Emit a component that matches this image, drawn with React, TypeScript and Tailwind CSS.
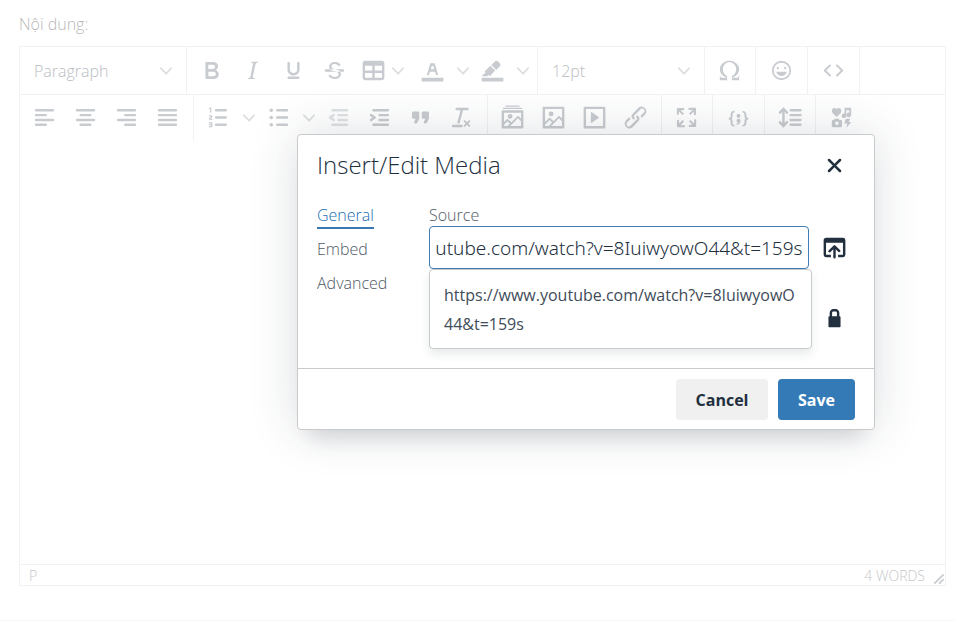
import { useLayoutEffect, useRef, useState } from "react";
import type { ReactNode } from "react";

const ICONS: Record<string, string> = {
  bold: "M7.8 19c-.3 0-.5 0-.6-.2l-.2-.5V5.7c0-.2 0-.4.2-.5l.6-.2h5c1.5 0 2.7.3 3.5 1 .7.6 1.1 1.4 1.1 2.5a3 3 0 01-.6 1.9c-.4.6-1 1-1.6 1.2.4.1.9.3 1.3.6s.8.7 1 1.2c.4.4.5 1 .5 1.6 0 1.3-.4 2.3-1.3 3-.8.7-2.1 1-3.8 1H7.8zm5-8.3c.6 0 1.2-.1 1.6-.5.4-.3.6-.7.6-1.3 0-1.1-.8-1.7-2.3-1.7H9.3v3.5h3.4zm.5 6c.7 0 1.3-.1 1.7-.4.4-.4.6-.9.6-1.5s-.2-1-.7-1.4c-.4-.3-1-.4-2-.4H9.4v3.8h4z",
  italic: "M16.7 4.7l-.1.9h-.3c-.6 0-1 0-1.4.3-.3.3-.4.6-.5 1.1l-2.1 9.8v.6c0 .5.4.8 1.4.8h.2l-.2.8H8l.2-.8h.2c1.1 0 1.8-.5 2-1.5l2-9.8.1-.5c0-.6-.4-.8-1.4-.8h-.3l.2-.9h5.8z",
  underline: "M16 5c.6 0 1 .4 1 1v5.5a4 4 0 01-.4 1.8l-1 1.4a5.3 5.3 0 01-5.5 1 5 5 0 01-1.6-1c-.5-.4-.8-.9-1.1-1.4a4 4 0 01-.4-1.8V6c0-.6.4-1 1-1s1 .4 1 1v5.5c0 .3 0 .6.2 1l.6.7a3.3 3.3 0 002.2.8 3.4 3.4 0 002.2-.8c.3-.2.4-.5.6-.8l.2-.9V6c0-.6.4-1 1-1zM8 17h8c.6 0 1 .4 1 1s-.4 1-1 1H8a1 1 0 010-2z",
  strike: "M15.6 8.5c-.5-.7-1-1.1-1.3-1.3-.6-.4-1.3-.6-2-.6-2.7 0-2.8 1.7-2.8 2.1 0 1.6 1.8 2 3.2 2.3 4.4.9 4.6 2.8 4.6 3.9 0 1.4-.7 4.1-5 4.1A6.2 6.2 0 017 16.4l1.5-1.1c.4.6 1.6 2 3.7 2 1.6 0 2.5-.4 3-1.2.4-.8.3-2-.8-2.6-.7-.4-1.6-.7-2.9-1-1-.2-3.9-.8-3.9-3.6C7.6 6 10.3 5 12.4 5c2.9 0 4.2 1.6 4.7 2.4l-1.5 1.1zM5 11h14a1 1 0 010 2H5a1 1 0 010-2z",
  table: "M19 4a2 2 0 012 2v12a2 2 0 01-2 2H5a2 2 0 01-2-2V6c0-1.1.9-2 2-2h14zM5 14v4h6v-4H5zm14 0h-6v4h6v-4zm0-6h-6v4h6V8zM5 12h6V8H5v4z",
  textColor: "M3 18h18v3H3zM8.7 16h-.8a.5.5 0 01-.5-.6l2.7-9c.1-.3.3-.4.5-.4h2.8c.2 0 .4.1.5.4l2.7 9a.5.5 0 01-.5.6h-.8a.5.5 0 01-.4-.4l-.7-2.2c0-.3-.3-.4-.5-.4h-3.4c-.2 0-.4.1-.5.4l-.7 2.2c0 .3-.2.4-.4.4zm2.6-7.6l-.6 2a.5.5 0 00.5.6h1.6a.5.5 0 00.5-.6l-.6-2c0-.3-.3-.4-.5-.4h-.4c-.2 0-.4.1-.5.4z",
  highlight: "M3 18h18v3H3zM7.7 16.7H3l3.3-3.3-.7-.8L10.2 8l4 4.1-4 4.2c-.2.2-.6.2-.8 0l-.6-.7-1.1 1.1zM11 7.4l3-2.9a2 2 0 012.6 0L18 6c.7.7.7 2 0 2.7l-2.9 2.9-1.8-1.8-.5-.6z",
  omega: "M15 18h4l1-2v4h-6v-3.3l1.4-1a6 6 0 001.8-2.9 6.3 6.3 0 00-.1-4.1 5.8 5.8 0 00-3-3.2c-.6-.3-1.3-.5-2.1-.5a5.1 5.1 0 00-3.9 1.8 6.3 6.3 0 00-1.3 6 6.2 6.2 0 001.8 3l1.4.9V20H4v-4l1 2h4v-.5l-2-1L5.4 15A6.5 6.5 0 014 11c0-1 .2-1.9.6-2.7A7 7 0 017.8 5C9.1 4.3 10.5 4 12 4c1.4 0 2.8.3 4 1a7.5 7.5 0 013.4 3.3c.4.8.6 1.7.6 2.7a6.5 6.5 0 01-1.5 4L17 16.5l-2 1v.5z",
  emoji: "M9 11c.6 0 1-.4 1-1s-.4-1-1-1a1 1 0 00-1 1c0 .6.4 1 1 1zm6 0c.6 0 1-.4 1-1s-.4-1-1-1a1 1 0 00-1 1c0 .6.4 1 1 1zm-3 5.5c2.1 0 4-1.5 4.4-3.5H7.6c.5 2 2.3 3.5 4.4 3.5zM12 4a8 8 0 100 16 8 8 0 000-16zm0 14.5a6.5 6.5 0 110-13 6.5 6.5 0 010 13z",
  source: "M9.8 15.7c.3.3.3.8 0 1-.3.4-.9.4-1.2 0l-4.4-4.1a.8.8 0 010-1.2l4.4-4.2c.3-.3.9-.3 1.2 0 .3.3.3.8 0 1.1L6 12l3.8 3.7zM14.2 15.7c-.3.3-.3.8 0 1 .4.4.9.4 1.2 0l4.4-4.1c.3-.3.3-.9 0-1.2l-4.4-4.2a.8.8 0 00-1.2 0c-.3.3-.3.8 0 1.1L18 12l-3.8 3.7z",
  alignLeft: "M5 5h14a1 1 0 010 2H5a1 1 0 010-2zm0 4h8a1 1 0 010 2H5a1 1 0 010-2zm0 8h8a1 1 0 010 2H5a1 1 0 010-2zm0-4h14a1 1 0 010 2H5a1 1 0 010-2z",
  alignCenter: "M5 5h14a1 1 0 010 2H5a1 1 0 010-2zm3 4h8a1 1 0 010 2H8a1 1 0 010-2zm0 8h8a1 1 0 010 2H8a1 1 0 010-2zm-3-4h14a1 1 0 010 2H5a1 1 0 010-2z",
  alignRight: "M5 5h14a1 1 0 010 2H5a1 1 0 010-2zm6 4h8a1 1 0 010 2h-8a1 1 0 010-2zm0 8h8a1 1 0 010 2h-8a1 1 0 010-2zm-6-4h14a1 1 0 010 2H5a1 1 0 010-2z",
  alignJustify: "M5 5h14a1 1 0 010 2H5a1 1 0 010-2zm0 4h14a1 1 0 010 2H5a1 1 0 010-2zm0 4h14a1 1 0 010 2H5a1 1 0 010-2zm0 4h14a1 1 0 010 2H5a1 1 0 010-2z",
  ordered: "M10 17h8c.6 0 1 .4 1 1s-.4 1-1 1h-8a1 1 0 010-2zm0-6h8c.6 0 1 .4 1 1s-.4 1-1 1h-8a1 1 0 010-2zm0-6h8c.6 0 1 .4 1 1s-.4 1-1 1h-8a1 1 0 110-2zM6 4v3.5c0 .3-.2.5-.5.5a.5.5 0 01-.5-.5V5h-.5a.5.5 0 010-1H6zm-1 8.8l.2.2h1.3c.3 0 .5.2.5.5s-.2.5-.5.5H4.9a1 1 0 01-.9-1V13c0-.4.3-.8.6-1l1.2-.4.2-.3a.2.2 0 00-.2-.2H4.5a.5.5 0 01-.5-.5c0-.3.2-.5.5-.5h1.6c.5 0 .9.4.9 1v.1c0 .4-.3.8-.6 1l-1.2.4-.2.3zM7 17v2c0 .6-.4 1-1 1H4.5a.5.5 0 010-1h1.2c.2 0 .3-.1.3-.3 0-.2-.1-.3-.3-.3H4.4a.4.4 0 110-.8h1.3c.2 0 .3-.1.3-.3 0-.2-.1-.3-.3-.3H4.5a.5.5 0 110-1H6c.6 0 1 .4 1 1z",
  unordered: "M11 5h8a1 1 0 010 2h-8a1 1 0 010-2zm0 6h8a1 1 0 010 2h-8a1 1 0 010-2zm0 6h8a1 1 0 010 2h-8a1 1 0 010-2zM4.500 6a1.500 1.500 0 103 0 1.500 1.500 0 10-3 0zm0 6a1.500 1.500 0 103 0 1.500 1.500 0 10-3 0zm0 6a1.500 1.500 0 103 0 1.500 1.500 0 10-3 0z",
  outdent: "M7 5h12c.6 0 1 .4 1 1s-.4 1-1 1H7a1 1 0 110-2zm5 4h7c.6 0 1 .4 1 1s-.4 1-1 1h-7a1 1 0 010-2zm0 4h7c.6 0 1 .4 1 1s-.4 1-1 1h-7a1 1 0 010-2zm-5 4h12a1 1 0 010 2H7a1 1 0 010-2zm1.600-3.800a1 1 0 01-1.200 1.600l-3-2a1 1 0 010-1.600l3-2a1 1 0 011.200 1.600L6.800 12l1.800 1.200z",
  indent: "M7 5h12c.6 0 1 .4 1 1s-.4 1-1 1H7a1 1 0 110-2zm5 4h7c.6 0 1 .4 1 1s-.4 1-1 1h-7a1 1 0 010-2zm0 4h7c.6 0 1 .4 1 1s-.4 1-1 1h-7a1 1 0 010-2zm-5 4h12a1 1 0 010 2H7a1 1 0 010-2zm-2.600-3.800L6.200 12l-1.800-1.200a1 1 0 011.200-1.600l3 2a1 1 0 010 1.600l-3 2a1 1 0 11-1.200-1.600z",
  quote: "M7.5 17h.9c.4 0 .7-.2.9-.6L11 13V8c0-.6-.4-1-1-1H6a1 1 0 00-1 1v4c0 .6.4 1 1 1h2l-1.300 2.700a1 1 0 00.8 1.300zm8 0h.9c.4 0 .7-.2.9-.6L19 13V8c0-.6-.4-1-1-1h-4a1 1 0 00-1 1v4c0 .6.4 1 1 1h2l-1.300 2.700a1 1 0 00.8 1.300z",
  clear: "M13.2 6a1 1 0 010 .2l-2.6 10a1 1 0 01-1 .8h-.2a.8.8 0 01-.8-1l2.6-10H8a1 1 0 110-2h9a1 1 0 010 2h-3.8zM5 18h7a1 1 0 010 2H5a1 1 0 010-2zm13 1.5L16.5 18 15 19.5a.7.7 0 01-1-1l1.500-1.500-1.500-1.500a.7.7 0 011-1l1.500 1.500 1.500-1.500a.7.7 0 011 1L17.500 17l1.500 1.500a.7.7 0 01-1 1z",
  gallery: "M5 15.7l2.300-2.200c.3-.3.7-.3 1 0L11 16l5.100-5c.3-.4.8-.4 1 0l2 1.900V8H5v7.700zM5 18V19h3l1.800-1.900-2-2L5 17.900zm14-3l-2.500-2.400-6.400 6.500H19v-4zM4 6h16c.6 0 1 .4 1 1v13c0 .6-.4 1-1 1H4a1 1 0 01-1-1V7c0-.6.4-1 1-1zm6 7a2 2 0 110-4 2 2 0 010 4zM4.500 4h15a.5.5 0 110 1h-15a.5.5 0 010-1zm2-2h11a.5.5 0 110 1h-11a.5.5 0 010-1z",
  image: "M5 15.7l3.300-3.200c.3-.3.7-.3 1 0L12 15l4.100-4c.3-.4.8-.4 1 0l2 1.900V5H5v10.700zM5 18V19h3l2.800-2.900-2-2L5 17.900zm14-3l-2.500-2.400-6.400 6.500H19v-4zM4 3h16c.6 0 1 .4 1 1v16c0 .6-.4 1-1 1H4a1 1 0 01-1-1V4c0-.6.4-1 1-1zm6 8a2 2 0 110-4 2 2 0 010 4z",
  media: "M4 3h16c.6 0 1 .4 1 1v16c0 .6-.4 1-1 1H4a1 1 0 01-1-1V4c0-.6.4-1 1-1zm1 2v14h14V5H5zm4.800 2.600l5.600 4a.5.5 0 010 .8l-5.600 4A.5.5 0 019 16V8a.5.5 0 01.8-.4z",
  link: "M6.200 12.300a1 1 0 011.400 1.400l-2.100 2a2 2 0 102.700 2.800l4.800-4.800a1 1 0 000-1.400 1 1 0 111.400-1.300 2.900 2.900 0 010 4L9.600 20a3.900 3.900 0 01-5.500-5.500l2-2zm11.600-.6a1 1 0 01-1.400-1.400l2-2a2 2 0 10-2.600-2.800L11 10.300a1 1 0 000 1.400A1 1 0 119.600 13a2.900 2.900 0 010-4L14.400 4a3.900 3.900 0 015.500 5.500l-2 2z",
  fullscreen: "M15.300 10l-1.200-1.300 2.900-3h-2.300a.9.9 0 110-1.700H19c.5 0 .9.4.9.9v4.400a.9.9 0 11-1.800 0V7l-2.900 3zm0 4l3 3v-2.300a.9.9 0 111.700 0V19c0 .5-.4.9-.9.9h-4.400a.9.9 0 110-1.800H17l-3-2.900 1.300-1.200zM10 15.400l-2.900 3h2.300a.9.9 0 110 1.700H5a.9.9 0 01-.9-.9v-4.400a.9.9 0 111.800 0V17l2.900-3 1.200 1.300zM8.700 10L5.700 7v2.300a.9.9 0 01-1.700 0V5c0-.5.4-.9.9-.9h4.400a.9.9 0 010 1.800H7l3 2.900-1.300 1.200z",
  codeSample: "M7.1 11a2.800 2.800 0 01-.8 2 2.800 2.800 0 01.8 2v1.700c0 .3.1.6.4.8.2.3.5.4.8.4.3 0 .4.2.4.4v.8c0 .2-.1.4-.4.4-.7 0-1.4-.3-2-.8-.5-.6-.8-1.3-.8-2V15c0-.3-.1-.6-.4-.8-.2-.3-.5-.4-.8-.4a.4.4 0 01-.4-.4v-.8c0-.2.2-.4.4-.4.3 0 .6-.1.8-.4.3-.2.4-.5.4-.8V9.300c0-.7.3-1.400.8-2 .6-.5 1.300-.8 2-.8.3 0 .4.2.4.4v.8c0 .2-.1.4-.4.4-.3 0-.6.1-.8.4-.3.2-.4.5-.4.8V11zm9.800 0V9.300c0-.3-.1-.6-.4-.8-.2-.3-.5-.4-.8-.4a.4.4 0 01-.4-.4V7c0-.2.1-.4.4-.4.7 0 1.400.3 2 .8.5.6.8 1.300.8 2V11c0 .3.1.6.4.8.2.3.5.4.8.4.2 0 .4.2.4.4v.8c0 .2-.2.4-.4.4-.3 0-.6.1-.8.4-.3.2-.4.5-.4.8v1.700c0 .7-.3 1.400-.8 2-.6.5-1.300.8-2 .8a.4.4 0 01-.4-.4v-.8c0-.2.1-.4.4-.4.3 0 .6-.1.8-.4.3-.2.4-.5.4-.8V15a2.800 2.800 0 01.8-2 2.800 2.800 0 01-.8-2zm-3.300-.4c0 .4-.1.8-.5 1.100-.3.3-.7.5-1.100.5-.4 0-.8-.2-1.100-.5-.4-.3-.5-.7-.5-1.100 0-.5.1-.9.5-1.200.3-.3.7-.4 1.100-.4.4 0 .8.1 1.100.4.4.3.5.7.5 1.200zM12 13c.4 0 .8.1 1.100.5.4.3.5.7.5 1.100 0 1-.1 1.600-.5 2a3 3 0 01-1.100 1c-.4.3-.8.4-1.100.4a.5.5 0 01-.5-.5V17a3 3 0 001-.2l.6-.6c-.6 0-1-.2-1.300-.5-.2-.3-.3-.7-.3-1 0-.5.1-1 .5-1.200.3-.4.7-.5 1.100-.5z",
  lineHeight: "M21 5a1 1 0 01.1 2H13a1 1 0 01-.1-2H21zm0 4a1 1 0 01.1 2H13a1 1 0 01-.1-2H21zm0 4a1 1 0 01.1 2H13a1 1 0 01-.1-2H21zm0 4a1 1 0 01.1 2H13a1 1 0 01-.1-2H21zM7 3.600l3.700 3.700a1 1 0 01-1.300 1.500h-.1L8 7.300v9.200l1.300-1.300a1 1 0 011.300 0h.1c.4.4.4 1 0 1.300v.1L7 20.400l-3.700-3.700a1 1 0 011.300-1.500h.1L6 16.700V7.400L4.700 8.700a1 1 0 01-1.300 0h-.1a1 1 0 010-1.300v-.1L7 3.600z",
  symbols: "M8 11.600 4.800 8.400C3.300 6.800 4.200 4.200 6.200 4.200c.8 0 1.400.4 1.800 1 .4-.6 1-1 1.800-1 2 0 2.900 2.600 1.400 4.200zM14.500 4H20v5.800a1.900 1.900 0 11-1.500-1.850V6H16v4.600a1.900 1.900 0 11-1.500-1.850zM6.300 13h3.400l.7 1h1c.6 0 1 .4 1 1v4c0 .6-.4 1-1 1H5c-.6 0-1-.4-1-1v-4c0-.6.4-1 1-1h.6zM8.200 15.300a1.500 1.500 0 100 3 1.500 1.500 0 000-3zM15.600 13h3.600l-1.300 2.700H20L16.200 20.400l.6-3.400h-2.500z",
  close: "M17.300 8.200L13.400 12l3.900 3.800a1 1 0 01-1.500 1.500L12 13.400l-3.800 3.900a1 1 0 01-1.500-1.500l3.900-3.800-3.900-3.800a1 1 0 011.500-1.500l3.800 3.900 3.800-3.900a1 1 0 011.500 1.500z",
  browse: "M19 4a2 2 0 012 2v12a2 2 0 01-2 2h-4v-2h4V8H5v10h4v2H5a2 2 0 01-2-2V6c0-1.100.9-2 2-2h14zm-8 9.400l-2.300 2.300a1 1 0 11-1.400-1.400l4-4a1 1 0 011.400 0l4 4a1 1 0 01-1.400 1.400L13 13.400V20a1 1 0 01-2 0v-6.600z",
  lock: "M16.300 11c.2 0 .3 0 .5.2l.2.6v7.400c0 .3 0 .4-.2.6l-.6.2H7.800c-.3 0-.4 0-.6-.2a.7.7 0 01-.2-.6v-7.400c0-.3 0-.4.2-.6l.5-.2H8V8c0-.8.3-1.500.9-2.100.6-.6 1.300-.9 2.100-.9h2c.8 0 1.500.3 2.100.9.6.6.9 1.300.9 2.100v3h.3zM10 8v3h4V8a1 1 0 00-.3-.7A1 1 0 0013 7h-2a1 1 0 00-.7.3A1 1 0 0010 8z",
};

function Icon({ name }: { name: string }) {
  return (
    <svg viewBox="0 0 24 24" fill="currentColor" fillRule="evenodd" aria-hidden="true" className="size-[29px] shrink-0">
      <path d={ICONS[name]} />
    </svg>
  );
}

function Chevron() {
  return (
    <svg viewBox="0 0 10 10" fill="currentColor" aria-hidden="true" className="size-3 shrink-0 text-[#dedfe1]">
      <path d="M8.700 2.200c.3-.3.8-.3 1 0 .4.4.4.9 0 1.200L5.700 7.800c-.3.3-.9.3-1.200 0L.2 3.400a.8.8 0 010-1.200c.3-.3.8-.3 1.100 0L5 6l3.700-3.800z" />
    </svg>
  );
}

function Tool({ icon, label, disabled }: { icon: string; label: string; disabled?: boolean }) {
  return (
    <button type="button" aria-label={label} disabled={disabled} className="flex h-10 min-w-[41px] flex-1 items-center justify-center disabled:text-[#e0e2e4]">
      <Icon name={icon} />
    </button>
  );
}

function SplitTool({ icon, label }: { icon: string; label: string }) {
  return (
    <div className="flex w-[60px]">
      <Tool icon={icon} label={label} />
      <button type="button" aria-label={`${label} options`} className="flex h-10 w-[19px] items-center justify-center">
        <Chevron />
      </button>
    </div>
  );
}

function SelectTool({ label, options }: { label: string; options: string[] }) {
  return (
    <div className="relative flex w-[157px] items-center">
      <select aria-label={label} className="h-10 w-full appearance-none bg-transparent pl-[10px] text-base font-light text-[#b9bdc1]">
        {options.map((o) => (
          <option key={o}>{o}</option>
        ))}
      </select>
      <span className="pointer-events-none absolute right-[9px]">
        <Chevron />
      </span>
    </div>
  );
}

function Group({ wide, children }: { wide?: boolean; children: ReactNode }) {
  return (
    <div className={`flex items-center border-r border-[#f2f2f2] pr-[5px] pl-1 ${wide ? "min-w-[52px]" : ""}`}>
      {children}
    </div>
  );
}

function Editor() {
  return (
    <section className="flex h-[540px] flex-col border border-[#f2f2f2] text-[#c8cbcf]">
      <div className="flex h-12 border-b border-[#f2f2f2]">
        <Group>
          <SelectTool label="Blocks" options={["Paragraph", "Heading 1", "Heading 2"]} />
        </Group>
        <Group>
          <Tool icon="bold" label="Bold" />
          <Tool icon="italic" label="Italic" />
          <Tool icon="underline" label="Underline" />
          <Tool icon="strike" label="Strikethrough" />
          <button type="button" aria-label="Table" className="flex h-10 w-[57px] items-center gap-1 pl-1">
            <Icon name="table" />
            <Chevron />
          </button>
          <SplitTool icon="textColor" label="Text color" />
          <SplitTool icon="highlight" label="Background color" />
        </Group>
        <Group>
          <SelectTool label="Font sizes" options={["12pt", "14pt", "18pt"]} />
        </Group>
        <Group>
          <Tool icon="omega" label="Special character" />
        </Group>
        <Group wide>
          <Tool icon="emoji" label="Emoticons" />
        </Group>
        <Group wide>
          <Tool icon="source" label="Source code" />
        </Group>
      </div>
      <div className="flex h-[45px]">
        <Group>
          <Tool icon="alignLeft" label="Align left" />
          <Tool icon="alignCenter" label="Align center" />
          <Tool icon="alignRight" label="Align right" />
          <Tool icon="alignJustify" label="Justify" />
        </Group>
        <Group>
          <SplitTool icon="ordered" label="Numbered list" />
          <SplitTool icon="unordered" label="Bullet list" />
          <Tool icon="outdent" label="Decrease indent" disabled />
          <Tool icon="indent" label="Increase indent" />
          <Tool icon="quote" label="Blockquote" />
          <Tool icon="clear" label="Clear formatting" />
        </Group>
        <Group>
          <Tool icon="gallery" label="Gallery" />
          <Tool icon="image" label="Insert/edit image" />
          <Tool icon="media" label="Insert/edit media" />
          <Tool icon="link" label="Insert/edit link" />
        </Group>
        <Group>
          <Tool icon="fullscreen" label="Fullscreen" />
        </Group>
        <Group wide>
          <Tool icon="codeSample" label="Code sample" />
        </Group>
        <Group>
          <Tool icon="lineHeight" label="Line height" />
        </Group>
        <div className="flex items-center pl-[5px]">
          <Tool icon="symbols" label="Media embed" />
        </div>
      </div>
      <div className="flex-1" />
      <footer className="flex h-[21px] items-center justify-between border-t border-[#f2f2f2] pt-px pl-[9px] text-sm font-light text-[#c4c7ca]">
        <span>P</span>
        <div className="flex items-center gap-2 self-stretch">
          <span>4 WORDS</span>
          <svg viewBox="0 0 10 10" fill="currentColor" aria-hidden="true" className="size-3 self-end text-[#c8cbcf]">
            <path d="M8.100 1.100A.5.5 0 119 2l-7 7A.5.5 0 111 8l7-7zM8.100 5.100A.5.5 0 119 6l-3 3A.5.5 0 115 8l3-3z" />
          </svg>
        </div>
      </footer>
    </section>
  );
}

const MEDIA_URL = "https://www.youtube.com/watch?v=8IuiwyowO44&t=159s";

function MediaDialog() {
  const [url, setUrl] = useState(MEDIA_URL);
  const field = useRef<HTMLInputElement>(null);

  // Keep the tail of a long address in view.
  useLayoutEffect(() => {
    if (field.current) field.current.scrollLeft = field.current.scrollWidth;
  }, []);

  return (
    <div
      role="dialog"
      aria-labelledby="media-title"
      className="absolute top-[134px] left-[297px] w-[578px] rounded-[4px] border border-[#c9cacc] bg-white text-[#222f3e] shadow-[0_19px_19px_-12px_rgba(34,47,62,0.15),0_0_48px_1px_rgba(34,47,62,0.15)]"
    >
      <header className="flex h-[60px] items-center justify-between pr-5 pl-[19px]">
        <h1 id="media-title" className="text-2xl font-light">Insert/Edit Media</h1>
        <button type="button" aria-label="Close" className="flex size-10 items-center justify-center">
          <Icon name="close" />
        </button>
      </header>
      <div className="flex pr-5 pl-[19px]">
        <div role="tablist" aria-label="Media sections" className="flex w-28 flex-col items-start gap-[9px] pt-[9px] text-base leading-[23px] font-light text-[#4f5966]">
          <button type="button" role="tab" aria-selected="true" className="border-b-2 border-[#3b78b0] text-[#1a6cb0]">General</button>
          <button type="button" role="tab" aria-selected="false">Embed</button>
          <button type="button" role="tab" aria-selected="false" className="pt-[2px]">Advanced</button>
        </div>
        <div className="relative flex h-[173px] flex-1 flex-col pt-[9px]">
          <label htmlFor="media-source" className="text-base leading-[22px] font-light text-[#4f5966]">Source</label>
          <div className="flex items-center justify-between">
            <input
              id="media-source"
              ref={field}
              type="text"
              value={url}
              onChange={(e) => setUrl(e.target.value)}
              className="h-[43px] w-[380px] rounded-[4px] border border-[#3f7cb4] px-[6px] font-['Noto_Sans','Open_Sans',sans-serif] text-[19px] font-light outline-none"
            />
            <button type="button" aria-label="Browse files" className="flex h-[43px] w-10 items-center justify-center">
              <Icon name="browse" />
            </button>
          </div>
          <button type="button" aria-label="Constrain proportions" className="mt-7 flex size-10 items-center justify-center self-end">
            <Icon name="lock" />
          </button>
          <ul
            role="listbox"
            aria-label="Previous sources"
            className="absolute top-[74px] left-0 w-[383px] rounded-[4px] border border-[#c9cacc] bg-white pt-[11px] pb-[9px] shadow-[0_5px_10px_rgba(34,47,62,0.1)]"
          >
            <li role="option" aria-selected="false" className="px-[14px] text-base leading-[29px] break-all text-[#414c59]">{MEDIA_URL}</li>
          </ul>
        </div>
      </div>
      <footer className="flex justify-end gap-[10px] border-t border-[#c9cacc] px-[19px] pt-[10px] pb-[9px] text-base font-bold">
        <button type="button" className="h-[41px] w-[92px] rounded-[4px] bg-[#f0f0f0]">Cancel</button>
        <button type="button" className="h-[41px] w-[77px] rounded-[4px] bg-[#337ab7] text-white">Save</button>
      </footer>
    </div>
  );
}

export default function App() {
  return (
    <main className="relative h-screen overflow-hidden bg-white font-['Open_Sans','Noto_Sans',sans-serif]">
      <div className="flex h-full flex-col border-b border-[#f6f6f6] pr-2 pl-[19px]">
        <p className="pt-3 pb-[10px] text-base font-light text-[#b8b8b8]">Nội dung:</p>
        <Editor />
      </div>
      <MediaDialog />
    </main>
  );
}
